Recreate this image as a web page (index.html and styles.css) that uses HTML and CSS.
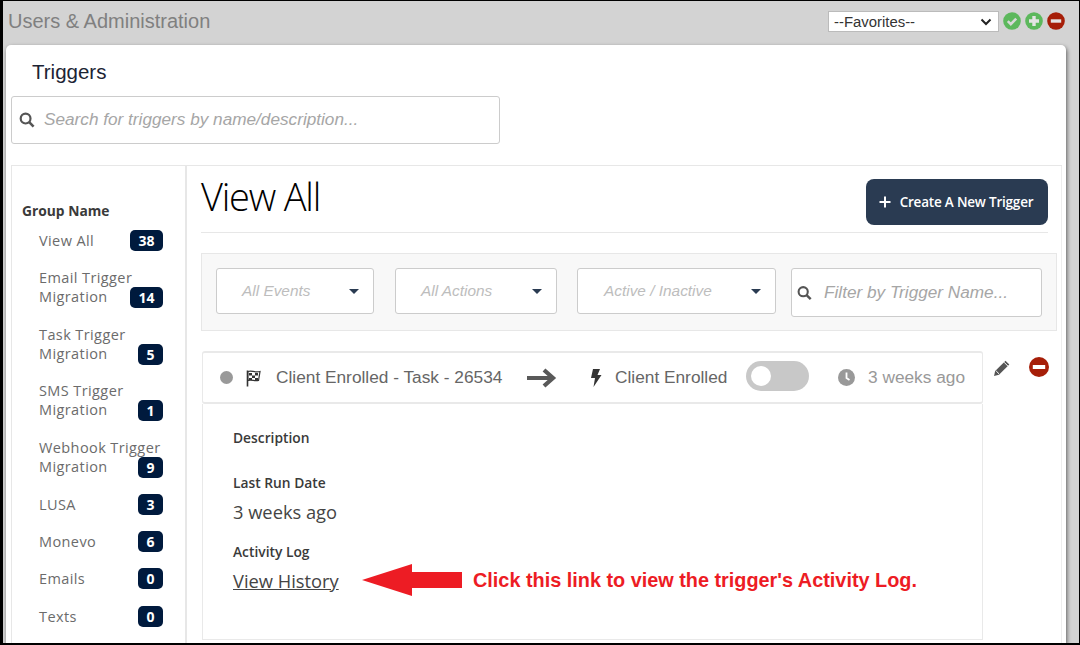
FILE: index.html
```html
<!DOCTYPE html>
<html lang="en">
<head>
<meta charset="utf-8">
<title>Triggers</title>
<link rel="stylesheet" href="styles.css">
</head>
<body>
<div class="frame">
  <header class="topbar">
    <div class="app-title">Users &amp; Administration</div>
    <div class="fav">
      <div class="fav-select"><span>--Favorites--</span>
        <svg class="chev" width="12" height="8" viewBox="0 0 12 8"><path d="M1.5 1.5L6 6l4.5-4.5" fill="none" stroke="#222" stroke-width="2"/></svg>
      </div>
      <svg class="fav-ic" width="18" height="18" viewBox="0 0 18 18"><circle cx="9" cy="9" r="8.8" fill="#5cb85c"/><path d="M4.8 9.2l3 3 5.4-5.6" fill="none" stroke="#d8d8d8" stroke-width="2.6"/></svg>
      <svg class="fav-ic" width="18" height="18" viewBox="0 0 18 18"><circle cx="9" cy="9" r="8.8" fill="#5cb85c"/><path d="M9 4v10M4 9h10" fill="none" stroke="#e4e4e4" stroke-width="3.4"/></svg>
      <svg class="fav-ic" width="18" height="18" viewBox="0 0 18 18"><circle cx="9" cy="9" r="8.8" fill="#a61e08"/><path d="M3.8 9h10.4" fill="none" stroke="#e4e4e4" stroke-width="3.4"/></svg>
    </div>
  </header>
  <section class="card">
    <h2 class="card-title">Triggers</h2>
    <div class="search">
      <svg width="16" height="16" viewBox="0 0 16 16"><circle cx="6.6" cy="6.6" r="4.9" fill="none" stroke="#555" stroke-width="2.2"/><path d="M10.2 10.2l4.4 4.4" stroke="#555" stroke-width="2.6"/></svg>
      <span>Search for triggers by name/description...</span>
    </div>
    <div class="columns">
      <aside class="side">
        <div class="side-head">Group Name</div>
        <div class="group g1 first"><span class="name">View All</span><span class="badge wide">38</span></div>
        <div class="group g2"><span class="name">Email Trigger<br>Migration</span><span class="badge wide">14</span></div>
        <div class="group g2"><span class="name">Task Trigger<br>Migration</span><span class="badge">5</span></div>
        <div class="group g2"><span class="name">SMS Trigger<br>Migration</span><span class="badge">1</span></div>
        <div class="group g2 last"><span class="name">Webhook Trigger<br>Migration</span><span class="badge">9</span></div>
        <div class="group g1"><span class="name">LUSA</span><span class="badge">3</span></div>
        <div class="group g1"><span class="name">Monevo</span><span class="badge">6</span></div>
        <div class="group g1 wider"><span class="name">Emails</span><span class="badge">0</span></div>
        <div class="group g1"><span class="name">Texts</span><span class="badge">0</span></div>
      </aside>
      <main class="main">
        <div class="main-head">
          <h1>View All</h1>
          <button class="create"><svg width="12" height="12" viewBox="0 0 12 12"><path d="M6 .5v11M.5 6h11" stroke="#fff" stroke-width="2"/></svg>Create A New Trigger</button>
        </div>
        <div class="filters">
          <div class="dd d1"><span>All Events</span><i></i></div>
          <div class="dd d2"><span>All Actions</span><i></i></div>
          <div class="dd d3"><span>Active / Inactive</span><i></i></div>
          <div class="filter-input">
            <svg width="15" height="16" viewBox="0 0 16 16"><circle cx="6.6" cy="6.6" r="4.9" fill="none" stroke="#555" stroke-width="2.2"/><path d="M10.2 10.2l4.4 4.4" stroke="#555" stroke-width="2.6"/></svg>
            <span>Filter by Trigger Name...</span>
          </div>
        </div>
        <div class="trigger-row">
          <div class="trigger">
            <span class="dot"></span>
            <svg class="flag" width="18" height="18" viewBox="0 0 18 18"><path d="M2.5 1.5v16" stroke="#333" stroke-width="1.6"/><path d="M3 2.5c4-1.5 6 1.5 12 0l-1.500 9c-4 1-7-1.500-10.500 0z" fill="#fff" stroke="#333" stroke-width="1.200"/><path d="M4 4h3v2.500h-3zM10 4h3v2.500h-3zM7 6.500h3v2.500h-3zM4 9h3v2h-3zM10 9h3v2h-3z" fill="#333"/></svg>
            <span class="t-name">Client Enrolled - Task - 26534</span>
            <svg class="arrow" width="32" height="22" viewBox="0 0 32 22"><path d="M2 11h26M19 3l9 8-9 8" fill="none" stroke="#595959" stroke-width="4.200"/></svg>
            <svg class="bolt" width="12" height="18" viewBox="0 0 12 18"><path d="M3 0h7L7.500 6H11.500L3.500 18 5 9H1z" fill="#333"/></svg>
            <span class="t-act">Client Enrolled</span>
            <span class="toggle"><span class="knob"></span></span>
            <svg class="clock" width="17" height="17" viewBox="0 0 17 17"><circle cx="8.500" cy="8.500" r="8.500" fill="#999"/><path d="M8.500 3.500v5.500l3 2" fill="none" stroke="#fff" stroke-width="1.800"/></svg>
            <span class="t-ago">3 weeks ago</span>
          </div>
          <div class="row-actions">
            <svg class="pencil" width="18" height="18" viewBox="0 0 18 18"><path d="M1 17l1.200-5L12.500 1.700l3.800 3.800L6 15.800z" fill="#555"/><path d="M11 3.200l3.800 3.800M3.200 12l2.800 2.800" stroke="#fff" stroke-width="1"/></svg>
            <svg width="20" height="20" viewBox="0 0 20 20"><circle cx="10" cy="10" r="10" fill="#a61e08"/><path d="M3.800 10h12.400" stroke="#fff" stroke-width="4"/></svg>
          </div>
        </div>
        <div class="detail">
          <div class="label">Description</div>
          <div class="label l2">Last Run Date</div>
          <div class="value">3 weeks ago</div>
          <div class="label l3">Activity Log</div>
          <a class="history" href="#">View History</a>
        </div>
      </main>
    </div>
  </section>
  <div class="note">
    <svg width="100" height="32" viewBox="0 0 100 32"><path d="M0 16L50 0v8h50v16H50v8z" fill="#ed1c24"/></svg>
    <span>Click this link to view the trigger's Activity Log.</span>
  </div>
</div>
</body>
</html>
```
FILE: styles.css
```css
* { box-sizing: border-box; }
html, body { margin: 0; padding: 0; }
body { width: 1080px; height: 645px; overflow: hidden; background: #000; font-family: "Open Sans", sans-serif; }
.frame { position: relative; width: 1078px; height: 642px; margin: 1px 0 0 1px; border-left: 2px solid #000; background: #d3d3d3; padding: 0 13px 0 3px; overflow: hidden; display: flex; flex-direction: column; }
.topbar { height: 44px; flex: none; display: flex; justify-content: space-between; padding: 9px 0 0 2px; }
.app-title { font: 20px/22px "Liberation Sans", sans-serif; color: #808080; }
.fav { display: flex; align-items: flex-start; gap: 4px; padding: 1px 0 0; margin-right: 1px; }
.fav-select { width: 171px; height: 21px; background: #fff; border: 1px solid #bbb; display: flex; align-items: center; justify-content: space-between; padding: 0 6px 0 5px; font: 14.900px "Liberation Sans", sans-serif; color: #333; }
.fav-ic { margin-top: 1px; }
.card { flex: 1; background: #fff; border-radius: 5px 5px 0 0; box-shadow: 1px 2px 4px rgba(0,0,0,.55); padding: 0 4px 0 5px; display: flex; flex-direction: column; min-height: 0; }
.card-title { margin: 14px 0 0 21px; font: 400 20.500px/26px "Liberation Sans", sans-serif; color: #1c2434; }
.search { width: 489px; height: 48px; margin-top: 11px; border: 1px solid #ccc; border-radius: 3px; display: flex; align-items: center; gap: 9px; padding: 0 0 1px 7px; font: italic 17.200px "Liberation Sans", sans-serif; color: #a6a6a6; }
.columns { flex: 1; display: flex; margin-top: 21px; border-top: 1px solid #e7e7e7; min-height: 0; }
.side { width: 176px; flex: none; border-left: 1px solid #e7e7e7; border-right: 2px solid #e7e7e7; padding: 35px 22px 0 10px; font-size: 14.500px; color: #6b6b6b; }
.side-head { font-weight: 700; font-size: 13.800px; line-height: 19px; color: #3a3a3a; margin-bottom: 9px; }
.group { display: flex; justify-content: space-between; padding-left: 17px; line-height: 19px; letter-spacing: .4px; }
.name { flex: 1; min-width: 0; white-space: nowrap; }
.g1 { align-items: center; height: 22px; margin-bottom: 15px; }
.wider { margin-bottom: 16px; }
.first { margin-bottom: 18px; }
.g2 { align-items: flex-end; height: 38px; margin-bottom: 18.670px; }
.last { margin-bottom: 17px; }
.g2 .name { margin-bottom: 1px; }
.g2 .badge { margin-bottom: -1px; }
.badge { background: #001a3d; color: #fff; font-weight: 700; font-size: 14px; line-height: 21px; height: 21px; width: 25px; border-radius: 5px; text-align: center; flex: none; letter-spacing: 0; }
.wide { width: 33px; }
.main { flex: 1; padding: 0 0 0 14px; border-right: 1px solid #eee; min-width: 0; }
.main-head { height: 67px; margin-right: 13px; display: flex; justify-content: space-between; border-bottom: 1px solid #e7e7e7; }
.main-head h1 { margin: 4px 0 0; font-weight: 300; font-size: 38px; line-height: 52px; letter-spacing: -1.200px; color: #000; }
.create { margin-top: 13px; width: 182px; height: 46px; background: #2a3b52; color: #fff; border: 0; border-radius: 8px; font: 600 13.500px "Open Sans", sans-serif; letter-spacing: -.2px; display: flex; align-items: center; justify-content: center; gap: 9px; padding: 0 2px 0 0; }
.filters { height: 78px; margin: 20px 4px 0 0; background: #f8f8f8; border: 1px solid #e7e7e7; display: flex; padding: 14px 14px 0; gap: 21px; align-items: flex-start; }
.dd { height: 46px; background: #fff; border: 1px solid #ccc; border-radius: 3px; display: flex; align-items: center; justify-content: space-between; padding: 0 14px 0 25px; font: italic 15.400px "Liberation Sans", sans-serif; color: #bdbdbd; flex: none; }
.dd i { border: 5px solid transparent; border-top: 5px solid #2a3b52; border-bottom: 0; }
.d1 { width: 158px; }
.d2 { width: 162px; }
.d3 { width: 199px; margin-left: -1px; padding-left: 26px; }
.filter-input { margin-left: -6px; width: 251px; height: 49px; background: #fff; border: 1px solid #ccc; border-radius: 3px; display: flex; align-items: center; gap: 12px; padding: 0 0 0 5px; font: italic 17.200px "Liberation Sans", sans-serif; color: #a6a6a6; }
.trigger-row { display: flex; margin: 20px 0 0 1px; align-items: flex-start; }
.trigger { width: 781px; height: 53px; flex: none; border: 1px solid #e9e9e9; border-width: 2px 1px 2px 1px; border-radius: 3px; display: flex; align-items: center; font: 17.300px "Liberation Sans", sans-serif; color: #666; padding-left: 17px; }
.dot { width: 13px; height: 13px; border-radius: 50%; background: #999; }
.flag { margin-left: 12px; }
.t-name { margin-left: 13px; width: 250px; white-space: nowrap; }
.arrow { margin-left: -1px; }
.bolt { margin-left: 33px; }
.t-act { margin-left: 13px; width: 131px; white-space: nowrap; }
.toggle { width: 63px; height: 30px; border-radius: 15px; background: #c8c8c8; padding: 5px; flex: none; margin-bottom: 3px; }
.knob { display: block; width: 20px; height: 20px; border-radius: 50%; background: #fff; }
.clock { margin-left: 29px; }
.t-ago { margin-left: 13px; color: #999; white-space: nowrap; }
.row-actions { display: flex; gap: 18px; margin-left: 10px; padding-top: 6px; align-items: flex-start; }
.pencil { margin-top: 2px; }
.detail { width: 781px; height: 236px; margin-left: 1px; border: 1px solid #e9e9e9; border-top: 0; padding: 25px 0 0 30px; color: #333; }
.label { font-size: 13.800px; font-weight: 600; line-height: 18px; color: #3a3a3a; }
.l2 { margin-top: 27px; }
.value { font-size: 18.300px; line-height: 26px; margin-top: 7px; color: #444; }
.l3 { margin-top: 18px; }
.history { display: block; margin-top: 7px; font-size: 18.300px; line-height: 26px; color: #444; text-decoration: underline; }
.note { position: absolute; left: 359px; top: 563px; display: flex; align-items: center; gap: 11px; font: 700 19.850px "Liberation Sans", sans-serif; color: #ed1c24; white-space: nowrap; }
```
